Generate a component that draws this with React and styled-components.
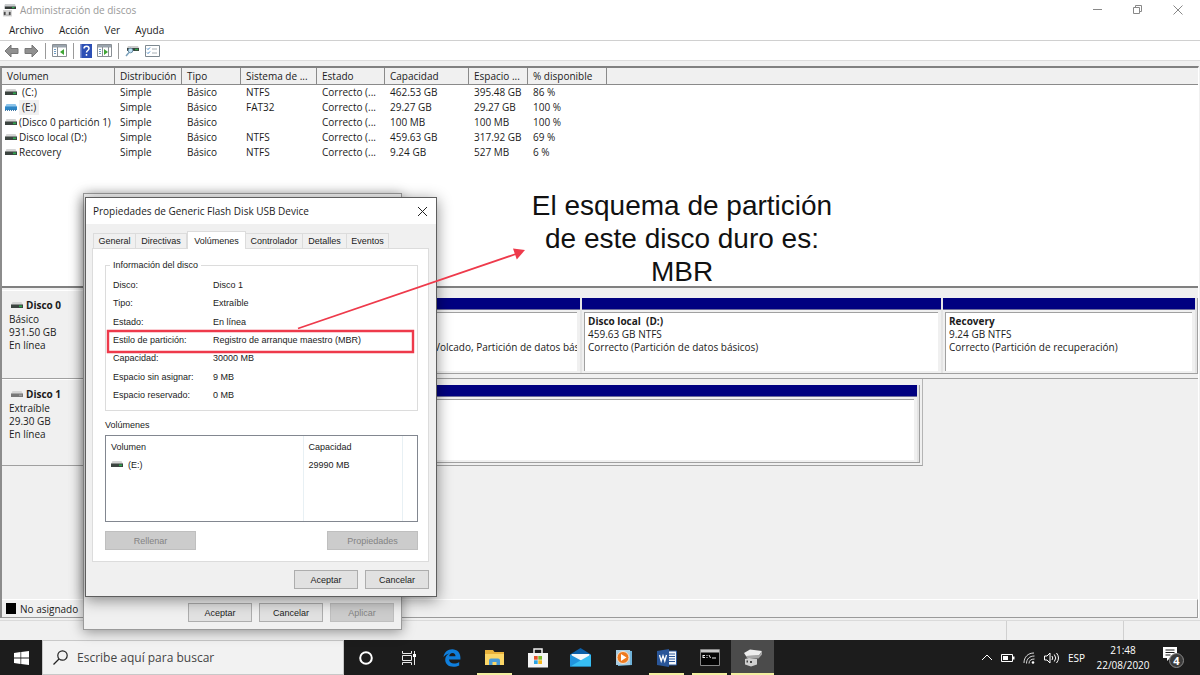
import React from "react";
import styled, { createGlobalStyle, css } from "styled-components";

const ui = '"Open Sans", "Noto Sans", sans-serif';
const shell = '"Liberation Sans", Arial, sans-serif';

const GlobalStyle = createGlobalStyle`
  *, *::before, *::after { box-sizing: border-box; }
  body { margin: 0; background: #f0f0f0; font-family: ${ui}; font-size: 10px; color: #1b1b1b; }
  button, input { font: inherit; color: inherit; margin: 0; }
`;

const Screen = styled.div`
  position: relative;
  display: flex;
  flex-direction: column;
  min-height: 100vh;
  overflow: hidden;
`;

/* ---------- main window ---------- */
const TitleBar = styled.header`
  display: flex;
  align-items: center;
  height: 20px;
  padding: 0 17px 0 3px;
  gap: 4px;
  background: #fff;
  color: #999;
  font-size: 10px;
  line-height: 20px;
`;
const WindowTitle = styled.h1`
  flex: 1;
  margin: 0;
  font: inherit;
`;
const Captions = styled.div`
  display: flex;
  gap: 30px;
`;
const CaptionButton = styled.button`
  display: flex;
  padding: 0;
  border: 0;
  background: none;
  line-height: 0;
`;
const MenuBar = styled.nav`
  display: flex;
  gap: 15px;
  height: 21px;
  padding: 0 9px;
  background: #fff;
  border-bottom: 1px solid #d0d0d0;
`;
const MenuItem = styled.button`
  padding: 0;
  border: 0;
  background: none;
  font-size: 10px;
  line-height: 20px;
`;
const ToolBar = styled.div`
  display: flex;
  align-items: center;
  gap: 5px;
  height: 20px;
  padding: 0 4px;
  background: #fff;
  border-bottom: 1px solid #dcdcdc;
`;
const ToolButton = styled.button`
  display: flex;
  padding: 0;
  border: 0;
  background: none;
`;
const ToolDivider = styled.span`
  width: 1px;
  height: 16px;
  margin: 0 1px;
  background: #9a9a9a;
`;
const Panes = styled.main`
  flex: 1;
  display: flex;
  flex-direction: column;
  margin: 5px 1px 0 0;
  border-left: 2px solid #8c8c8c;
  border-top: 2px solid #808080;
  border-right: 1px solid #fff;
`;
const ListPane = styled.section`
  height: 220px;
  background: #fff;
  border-bottom: 2px solid #808080;
`;
const VolumeTable = styled.table`
  width: 100%;
  table-layout: fixed;
  border-collapse: separate;
  border-spacing: 0;
`;
const HeadCell = styled.th`
  height: 17px;
  padding: 0 0 0 5px;
  border-right: 1px solid #8a8a8a;
  border-bottom: 1px solid #8a8a8a;
  background: #f0f0f0;
  font-weight: 400;
  font-size: 10px;
  line-height: 16px;
  text-align: left;
  white-space: nowrap;
  &:last-child { border-right: 0; }
`;
const Cell = styled.td`
  height: 15px;
  padding: 0 0 0 5px;
  font-size: 10px;
  line-height: 15px;
  white-space: nowrap;
`;
const VolumeName = styled.span`
  display: flex;
  align-items: center;
  margin-left: -2px;
  gap: 2px;
`;
const NameText = styled.span`
  padding: 0 ${(p) => (p.$letter ? "3px" : "0")};
  background: ${(p) => (p.$selected ? "#f0f0f0" : "transparent")};
`;

const GraphPane = styled.section`
  flex: 1;
  display: flex;
  flex-direction: column;
  padding-top: 2px;
`;
const DiskRow = styled.div`
  display: grid;
  grid-template-columns: 84px 1fr;
  height: ${(p) => p.$height}px;
  border-bottom: 1px solid #a0a0a0;
`;
const DiskRowShort = styled(DiskRow)`
  border-bottom: 0;
`;
const DiskLabel = styled.div`
  padding: 7px 0 0 7px;
  line-height: 13px;
  border-top: 1px solid #fff;
  border-bottom: ${(p) => (p.$closed ? "1px solid #a0a0a0" : "0")};
`;
const DiskName = styled.div`
  display: flex;
  align-items: center;
  gap: 3px;
  padding-left: 2px;
  font-size: 10px;
  line-height: 15px;
  font-weight: 700;
`;
const Partitions = styled.div`
  display: grid;
  grid-template-columns: ${(p) => p.$columns};
  gap: 2px;
  margin: ${(p) => p.$margin};
  padding-right: 2px;
  border-right: 1px solid #a0a0a0;
  border-bottom: 1px solid #a0a0a0;
  background: #e4e4e4;
`;
const Frame = styled.div`
  width: ${(p) => p.$width};
  display: grid;
  border-right: 1px solid #b4b4b4;
  border-bottom: 1px solid #a0a0a0;
`;
const Partition = styled.div`
  display: flex;
  flex-direction: column;
  gap: 2px;
  min-width: 0;
  background: #f0f0f0;
  &::before { content: ""; height: 12px; background: #000080; border-bottom: 1px solid #6d6d9a; }
`;
const PartitionBody = styled.div`
  flex: 1;
  margin: 0 3px 2px 2px;
  padding: 2px 0 0 3px;
  overflow: hidden;
  border-top: 1px solid #a0a0a0;
  border-left: 1px solid #a0a0a0;
  background: #fff;
  line-height: 13px;
  white-space: pre;
`;
const Legend = styled.div`
  display: flex;
  align-items: center;
  gap: 4px;
  height: 19px;
  margin-top: auto;
  padding-left: 4px;
  border-top: 1px solid #fff;
  border-bottom: 1px solid #9a9a9a;
  border-right: 1px solid #9a9a9a;
`;
const Swatch = styled.span`
  width: 10px;
  height: 11px;
  background: #000;
`;
const StatusBar = styled.footer`
  display: grid;
  grid-template-columns: 1fr 117px 76px;
  height: 20px;
  margin-top: 2px;
  border-top: 1px solid #dadada;
`;
const StatusCell = styled.div`
  border-right: 1px solid #d0d0d0;
  &:last-child { border-right: 0; }
`;

/* ---------- dialogs ---------- */
const dialogBase = css`
  position: absolute;
  display: flex;
  flex-direction: column;
  background: #f0f0f0;
  font-family: ${shell};
  font-size: 9px;
`;
const BackDialog = styled.div`
  ${dialogBase}
  left: 83px;
  top: 193px;
  width: 319px;
  height: 437px;
  justify-content: flex-end;
  padding: 0 7px 7px;
  border: 1px solid #9a9a9a;
  box-shadow: 0 2px 12px rgba(0, 0, 0, 0.4);
`;
const FrontDialog = styled.div`
  ${dialogBase}
  left: 85px;
  top: 197px;
  width: 352px;
  height: 400px;
  border: 1px solid #5e5e5e;
  box-shadow: 0 3px 14px rgba(0, 0, 0, 0.45);
`;
const DialogTitle = styled.div`
  display: flex;
  align-items: center;
  justify-content: space-between;
  height: 26px;
  padding: 0 8px 0 7px;
  background: #fff;
  font-family: ${ui};
  font-size: 10px;
`;
const TabStrip = styled.div`
  display: flex;
  align-items: flex-end;
  height: 24px;
  padding: 0 7px;
`;
const Tab = styled.button`
  position: relative;
  height: ${(p) => (p.$active ? "18px" : "15px")};
  margin-bottom: ${(p) => (p.$active ? "-1px" : "0")};
  width: ${(p) => p.$width}px;
  padding: 0;
  border: 1px solid #dcdcdc;
  border-left-width: ${(p) => (p.$first || p.$active ? "1px" : "0")};
  border-bottom: 0;
  background: ${(p) => (p.$active ? "#fff" : "#f0f0f0")};
  line-height: 14px;
  white-space: nowrap;
`;
const TabPage = styled.div`
  flex: 1;
  margin: 0 7px 0 6px;
  padding: 10px 10px 0 12px;
  border: 1px solid #dcdcdc;
  background: #fff;
`;
const Group = styled.fieldset`
  height: 152px;
  margin: 0;
  padding: 7px;
  border: 1px solid #dcdcdc;
`;
const GroupTitle = styled.legend`
  margin-left: -3px;
  padding: 0 3px;
  line-height: 12px;
`;
const Facts = styled.dl`
  display: grid;
  grid-template-columns: 100px 1fr;
  align-content: space-between;
  height: 124px;
  margin: 0;
  line-height: 14px;
  dt, dd { margin: 0; }
`;
const SectionTitle = styled.div`
  margin-top: 7px;
  line-height: 14px;
`;
const ListBox = styled.div`
  height: 87px;
  margin-top: 3px;
  border: 1px solid #828790;
`;
const DialogTable = styled.table`
  width: 297px;
  height: 85px;
  table-layout: fixed;
  border-collapse: collapse;
  th, td {
    padding: 0 0 0 5px;
    border-right: 1px solid #e8f0f4;
    font-weight: 400;
    text-align: left;
    vertical-align: top;
    line-height: 18px;
  }
  th { height: 20px; padding-top: 2px; }
`;
const DriveLabel = styled.span`
  display: flex;
  align-items: center;
  gap: 5px;
`;
const ButtonRow = styled.div`
  display: flex;
  justify-content: ${(p) => (p.$split ? "space-between" : "flex-end")};
  gap: 7px;
  padding: ${(p) => p.$pad || "0"};
`;
const PushButton = styled.button`
  width: ${(p) => (p.$wide ? "91px" : "64px")};
  height: 19px;
  padding: 0;
  border: 1px solid #adadad;
  background: #e1e1e1;
  line-height: 16px;
  &:disabled { background: #ccc; border-color: #bfbfbf; color: #838383; }
`;

/* ---------- annotation ---------- */
const Note = styled.p`
  position: absolute;
  left: 517px;
  top: 189px;
  width: 330px;
  margin: 0;
  color: #111;
  font-family: "Liberation Sans", Arial, sans-serif;
  font-size: 28px;
  line-height: 33px;
  text-align: center;
`;
const Marks = styled.svg`
  position: absolute;
  left: 100px;
  top: 240px;
  pointer-events: none;
`;

/* ---------- taskbar ---------- */
const TaskBar = styled.div`
  display: flex;
  height: 35px;
  background: #1c1c1c;
  color: #fff;
`;
const StartButton = styled.button`
  display: grid;
  place-items: center;
  width: 42px;
  padding: 0;
  border: 0;
  background: none;
`;
const Search = styled.label`
  display: flex;
  align-items: center;
  gap: 9px;
  width: 302px;
  padding-left: 10px;
  border: 1px solid #c8c8c8;
  background: #f2f2f2;
`;
const SearchInput = styled.input`
  flex: 1;
  min-width: 0;
  padding: 0;
  border: 0;
  outline: 0;
  background: none;
  font-size: 12px;
  &::placeholder { color: #444; opacity: 1; }
`;
const Apps = styled.div`
  display: flex;
  flex: 1;
`;
const AppButton = styled.button`
  display: grid;
  place-items: center;
  width: 43px;
  padding: 0;
  border: 0 solid transparent;
  border-width: 0 ${(p) => (p.$active ? "0" : "4px")};
  background: ${(p) => (p.$active ? "#4b4b4b" : "transparent")};
  box-shadow: ${(p) => (p.$open ? "inset 0 -2px 0 #f3efa0" : "none")};
`;
const Tray = styled.div`
  display: flex;
  align-items: center;
  gap: 8px;
  padding-right: 15px;
  font-size: 10px;
`;
const Clock = styled.time`
  width: 56px;
  margin-left: 2px;
  font-size: 10px;
  line-height: 15px;
  text-align: center;
`;
const NoticeButton = styled.button`
  display: flex;
  margin-left: 3px;
  padding: 0;
  border: 0;
  background: none;
`;

const DriveIcon = ({ tone }) => {
  const blue = tone === "blue";
  return (
    <svg width="12" height="8" viewBox="0 0 12 8" aria-hidden="true">
      <path d="M1.500 0h9L12 3H0z" fill={blue ? "#8cc4ea" : "#d5d5d5"} />
      <rect y="2.500" width="12" height="3.500" fill={blue ? "#2f86c5" : tone === "gray" ? "#777" : "#3c4440"} />
      {!blue && <rect x="8" y="3.500" width="3" height="1.600" fill={tone === "gray" ? "#999" : "#2da84c"} />}
      {blue && <path d="M0 6.300h12" stroke="#1c5d92" strokeDasharray="1 1" />}
    </svg>
  );
};

const Arrow = ({ flip }) => (
  <svg width="15" height="14" viewBox="0 0 15 14" aria-hidden="true">
    <path
      transform={flip ? "translate(15 0) scale(-1 1)" : undefined}
      d="M1 7l6-6v3.500h7v5H7V13z" fill="#909090" stroke="#777" strokeWidth="1" />
  </svg>
);

const PanelIcon = ({ side }) => (
  <svg width="15" height="13" viewBox="0 0 15 13" aria-hidden="true">
    <path d="M.5 .5h14v12H.5z" fill="#fff" stroke="#8a8f94" />
    <path d="M1 1h13v2.500H1z" fill="#9aa4ad" />
    <path d={side === "left" ? "M5.500 3v9.500" : "M5.500 3v9.500M11.500 3v9.500"} stroke="#8a8f94" />
    <path d="M2 5.500h2M2 7.500h2M2 9.500h2" stroke="#6d9bc4" />
    <path d={side === "left" ? "M12 5v6L8 8z" : "M7 5v6l4-3z"} fill="#3fa534" />
  </svg>
);

const volumes = [
  ["(C:)", "Simple", "Básico", "NTFS", "Correcto (...", "462.53 GB", "395.48 GB", "86 %"],
  ["(E:)", "Simple", "Básico", "FAT32", "Correcto (...", "29.27 GB", "29.27 GB", "100 %"],
  ["(Disco 0 partición 1)", "Simple", "Básico", "", "Correcto (...", "100 MB", "100 MB", "100 %"],
  ["Disco local (D:)", "Simple", "Básico", "NTFS", "Correcto (...", "459.63 GB", "317.92 GB", "69 %"],
  ["Recovery", "Simple", "Básico", "NTFS", "Correcto (...", "9.24 GB", "527 MB", "6 %"],
];
const columns = [
  ["Volumen", 113], ["Distribución", 67], ["Tipo", 59], ["Sistema de ...", 76],
  ["Estado", 68], ["Capacidad", 84], ["Espacio ...", 59], ["% disponible", 79],
];
const facts = [
  ["Disco:", "Disco 1"], ["Tipo:", "Extraíble"], ["Estado:", "En línea"],
  ["Estilo de partición:", "Registro de arranque maestro (MBR)"],
  ["Capacidad:", "30000 MB"], ["Espacio sin asignar:", "9 MB"], ["Espacio reservado:", "0 MB"],
];
const tabs = [
  ["General", 43], ["Directivas", 51], ["Volúmenes", 59], ["Controlador", 57], ["Detalles", 44], ["Eventos", 42],
];

const taskApps = [
  { name: "Cortana", icon: <svg width="16" height="16"><circle cx="8" cy="8" r="5.800" fill="none" stroke="#fff" strokeWidth="2" /></svg> },
  { name: "Vista de tareas", icon: (
    <svg width="16" height="14" fill="none" stroke="#e8e8e8">
      <path d="M1.500 0v2.500h9V0M1.500 14v-2.500h9V14M1.500 4.500h9v5h-9zM13.500 0v14" /><path d="M12 3h3v3h-3z" fill="#fff" stroke="none" />
    </svg>) },
  { name: "Edge", icon: (
    <svg width="18" height="18" viewBox="0 0 18 18">
      <path d="M.5 8C1.200 3.300 4.700.3 9.200.3c5 0 8.200 3.600 8.200 8v2.200H6c.2 2.500 2.300 4 5 4 1.900 0 3.700-.5 5.200-1.500v3.500c-1.700.9-3.700 1.300-5.800 1.300-5 0-8.200-2.800-8.200-7C2.200 7.800 3.800 5.600 6.400 4.400 3.900 4.700 2 6 .5 8zM6.200 7.200h6.300c0-2-1-3.300-3-3.300S6.500 5.300 6.200 7.200z" fill="#0f7edb" />
    </svg>) },
  { name: "Explorador", open: true, icon: (
    <svg width="20" height="17" viewBox="0 0 20 17">
      <path d="M0 1h8l1.500 2H19v13H0z" fill="#e8b23c" /><path d="M0 5h19v11H0z" fill="#fbd667" />
      <path d="M4 16v-4.500q0-2 2-2h7q2 0 2 2V16h-3.500v-3h-4v3z" fill="#4a9bd8" />
    </svg>) },
  { name: "Tienda", icon: (
    <svg width="20" height="20" viewBox="0 0 20 20">
      <path d="M6 6V1h8v5" fill="none" stroke="#f2f2f2" strokeWidth="1.500" /><path d="M0 5h20v14.500H0z" fill="#f4f4f4" />
      <path d="M6 8h3.700v3.700H6z" fill="#e5512a" /><path d="M10.300 8H14v3.700h-3.700z" fill="#7dba28" />
      <path d="M6 12.300h3.700V16H6z" fill="#2aa3e4" /><path d="M10.300 12.300H14V16h-3.700z" fill="#f6b71c" />
    </svg>) },
  { name: "Correo", icon: (
    <svg width="21" height="19" viewBox="0 0 21 19">
      <path d="M0 6.500L10.500 0 21 6.500v12H0z" fill="#0b5fa8" /><path d="M1.500 6h18v7h-18z" fill="#f3f7fa" />
      <path d="M0 6.500L12 13 0 18.500z" fill="#2193dc" /><path d="M21 6.500L0 18.500h21z" fill="#37bdf2" />
    </svg>) },
  { name: "Reproductor", icon: (
    <svg width="18" height="18" viewBox="0 0 18 18">
      <path d="M3 1l14 1v14L3 17z" fill="#6fb2d8" /><path d="M1 1h14v15H1z" fill="#a8cde2" />
      <circle cx="8" cy="8.500" r="6" fill="#ee7a1f" stroke="#f7e3d0" /><path d="M6 5l5.500 3.500L6 12z" fill="#fff" />
    </svg>) },
  { name: "Word", open: true, icon: (
    <svg width="20" height="18" viewBox="0 0 20 18">
      <path d="M11 2h8.500v14H11z" fill="#f4f7fb" stroke="#2a5699" /><path d="M12 5h6M12 7.500h6M12 10h6M12 12.500h6" stroke="#2a5699" />
      <path d="M0 2l12-2v18L0 16z" fill="#2a5699" /><path d="M2.500 6l1.700 6L6 6.800 7.800 12 9.500 6" fill="none" stroke="#fff" strokeWidth="1.300" />
    </svg>) },
  { name: "Consola", open: true, icon: (
    <svg width="20" height="17" viewBox="0 0 20 17">
      <path d="M.5.5h19v16H.5z" fill="#050505" stroke="#888" /><path d="M1 1h18v2.500H1z" fill="#c8c8c8" />
      <path d="M3 6.500h2M3 6v3M3 8.500h2M7 6v1M7 8v1M9 6l1.500 3M12 9h4" stroke="#eee" />
    </svg>) },
  { name: "Administración de discos", open: true, active: true, icon: (
    <svg width="20" height="18" viewBox="0 0 20 18">
      <path d="M1 4l6-3.500 12 1.500-3 4.500L3 7z" fill="#ededed" /><path d="M1 4l2 3 13-.5L19 2v3.500l-3.500 4L4 9z" fill="#a6a6a6" />
      <path d="M2 10l4-1 8 1v5.500L8 17.500l-6-2z" fill="#cfcfcf" /><path d="M3.500 11.500h1.500v2H3.500zM7 12h2v2H7z" fill="#444" />
    </svg>) },
];

export default function App() {
  return (
    <Screen>
      <GlobalStyle />
      <TitleBar>
        <svg width="13" height="13" viewBox="0 0 13 13" aria-hidden="true">
          <path d="M2 0h10l1 3v2H1V3z" fill="#c9ccce" /><path d="M2 2.500h11V5H2z" fill="#343a38" />
          <path d="M9 3h2.500v1.200H9z" fill="#2da84c" /><path d="M0 6h9v6.500H0z" fill="#d6d6d6" />
          <path d="M1 8h1.500v3H1zM6 8h1.500v3H6zM3 11h3" fill="#333" stroke="#777" strokeWidth=".5" />
        </svg>
        <WindowTitle>Administración de discos</WindowTitle>
        <Captions>
          <CaptionButton aria-label="Minimizar"><svg width="10" height="10"><path d="M0 4.500h9" stroke="#888" /></svg></CaptionButton>
          <CaptionButton aria-label="Restaurar"><svg width="10" height="10" fill="none" stroke="#888"><path d="M.5 2.500h6v6h-6zM2.500 2.500v-2h6v6h-2" /></svg></CaptionButton>
          <CaptionButton aria-label="Cerrar"><svg width="10" height="10"><path d="M.5.5l9 9M9.500.5l-9 9" stroke="#888" /></svg></CaptionButton>
        </Captions>
      </TitleBar>
      <MenuBar>
        {["Archivo", "Acción", "Ver", "Ayuda"].map((m) => <MenuItem key={m}>{m}</MenuItem>)}
      </MenuBar>
      <ToolBar>
        <ToolButton aria-label="Atrás"><Arrow /></ToolButton>
        <ToolButton aria-label="Adelante"><Arrow flip /></ToolButton>
        <ToolDivider />
        <ToolButton aria-label="Árbol"><PanelIcon side="left" /></ToolButton>
        <ToolDivider />
        <ToolButton aria-label="Ayuda">
          <svg width="12" height="14" viewBox="0 0 12 14">
            <path d="M0 0h12v14H0z" fill="#2c4fb5" /><path d="M0 0h1.500v14H0z" fill="#8396d4" />
            <path d="M4 4.500c0-3 5-3 5 0 0 2-2.500 2-2.500 4M6.500 10v1.800" fill="none" stroke="#fff" strokeWidth="1.500" />
          </svg>
        </ToolButton>
        <ToolButton aria-label="Panel de acciones"><PanelIcon side="right" /></ToolButton>
        <ToolDivider />
        <ToolButton aria-label="Actualizar">
          <svg width="15" height="13" viewBox="0 0 15 13">
            <path d="M3 2h10l1 2H2z" fill="#ccc" /><path d="M2 4h12v3H2z" fill="#3c4440" /><path d="M10 4.800h3v1.400h-3z" fill="#2da84c" />
            <circle cx="5.500" cy="6.500" r="2.300" fill="#bfe0f2" stroke="#6a8fa8" /><path d="M4 8.500L1 12" stroke="#7aa0ba" strokeWidth="1.500" />
          </svg>
        </ToolButton>
        <ToolButton aria-label="Propiedades">
          <svg width="15" height="12" viewBox="0 0 15 12">
            <path d="M.5.5h14v11H.5z" fill="#fff" stroke="#7d8890" /><path d="M2 3.500l1 1 2-2M2 7.500l1 1 2-2" fill="none" stroke="#3b82c4" />
            <path d="M7 4h5M7 8h5" stroke="#a8b0b6" />
          </svg>
        </ToolButton>
      </ToolBar>

      <Panes>
        <ListPane>
          <VolumeTable>
            <colgroup>{columns.map(([n, w]) => <col key={n} style={{ width: w }} />)}<col /></colgroup>
            <thead><tr>{columns.map(([n]) => <HeadCell key={n}>{n}</HeadCell>)}<HeadCell as="td" /></tr></thead>
            <tbody>
              {volumes.map((row, r) => (
                <tr key={row[0]}>
                  {row.map((v, i) => (
                    <Cell key={i}>
                      {i ? v : (
                        <VolumeName>
                          <DriveIcon tone={r === 1 ? "blue" : "green"} />
                          <NameText $letter={r < 2} $selected={r === 1}>{v}</NameText>
                        </VolumeName>
                      )}
                    </Cell>
                  ))}
                </tr>
              ))}
            </tbody>
          </VolumeTable>
        </ListPane>

        <GraphPane>
          <DiskRow $height={89}>
            <DiskLabel>
              <DiskName><DriveIcon />Disco 0</DiskName>
              <div>Básico</div><div>931.50 GB</div><div>En línea</div>
            </DiskLabel>
            <Partitions $columns="340fr 152fr 359fr 252fr" $margin="8px 0 4px">
              <Partition><PartitionBody /></Partition>
              <Partition><PartitionBody>{"\n\nVolcado, Partición de datos básicos)"}</PartitionBody></Partition>
              <Partition><PartitionBody><strong>{"Disco local  (D:)"}</strong>{"\n459.63 GB NTFS\nCorrecto (Partición de datos básicos)"}</PartitionBody></Partition>
              <Partition><PartitionBody><strong>Recovery</strong>{"\n9.24 GB NTFS\nCorrecto (Partición de recuperación)"}</PartitionBody></Partition>
            </Partitions>
          </DiskRow>
          <DiskRowShort $height={87}>
            <DiskLabel $closed>
              <DiskName><DriveIcon tone="gray" />Disco 1</DiskName>
              <div>Extraíble</div><div>29.30 GB</div><div>En línea</div>
            </DiskLabel>
            <Frame $width="75.3%">
              <Partitions $columns="1fr" $margin="6px 2px 2px 0"><Partition><PartitionBody /></Partition></Partitions>
            </Frame>
          </DiskRowShort>
          <Legend><Swatch />No asignado</Legend>
        </GraphPane>
      </Panes>
      <StatusBar><StatusCell /><StatusCell /><StatusCell /></StatusBar>

      <TaskBar>
        <StartButton aria-label="Inicio">
          <svg width="15" height="14" viewBox="0 0 15 14" fill="#fff"><path d="M0 2l6.500-.9v5.500H0zM7.200 1L15 0v6.600H7.200zM0 7.400h6.500v5.500L0 12zM7.200 7.400H15V14l-7.800-1z" /></svg>
        </StartButton>
        <Search>
          <svg width="15" height="15" viewBox="0 0 15 15" fill="none" stroke="#222" strokeWidth="1.200"><circle cx="9.500" cy="5.500" r="4.700" /><path d="M6 9l-5.500 5.500" /></svg>
          <SearchInput aria-label="Buscar" placeholder="Escribe aquí para buscar" />
        </Search>
        <Apps>
          {taskApps.map((a) => <AppButton key={a.name} aria-label={a.name} $open={a.open} $active={a.active}>{a.icon}</AppButton>)}
        </Apps>
        <Tray>
          <svg width="12" height="7" fill="none" stroke="#fff"><path d="M1 6l5-5 5 5" /></svg>
          <svg width="14" height="8"><path d="M.5.5h11v7H.5z" fill="none" stroke="#fff" /><path d="M2 2h5v4H2zM12 2.500h1.500v3H12z" fill="#fff" /></svg>
          <svg width="13" height="12" fill="none" stroke="#ddd"><path d="M1 11C1 5 5 1 11 1M3.500 11.500c0-4.500 3-7.500 8-7.500M6 11.500C6 8.500 8 7 11.500 7" /><circle cx="10" cy="10.500" r="1.300" fill="#fff" stroke="none" /></svg>
          <svg width="16" height="12" fill="none" stroke="#fff"><path d="M.5 4v4H3l3 3V1L3 4zM8 4q1.500 2 0 4M10.300 2.500q3 3.500 0 7M12.500 1q4 5 0 10" /></svg>
          <span>ESP</span>
          <Clock>21:48<br />22/08/2020</Clock>
          <NoticeButton aria-label="Notificaciones">
            <svg width="23" height="23" viewBox="0 0 23 23">
              <path d="M1 1h14v11H8l-3 3v-3H1z" fill="#fff" /><path d="M3.500 4h9M3.500 6.500h9M3.500 9h5" stroke="#1c1c1c" />
              <circle cx="14.500" cy="14.500" r="7" fill="#3b3b3b" stroke="#8a8a8a" />
              <text x="14.500" y="18.500" textAnchor="middle" fontSize="11" fontWeight="700" fill="#fff">4</text>
            </svg>
          </NoticeButton>
        </Tray>
      </TaskBar>

      <BackDialog>
        <ButtonRow>
          <PushButton>Aceptar</PushButton><PushButton>Cancelar</PushButton><PushButton disabled>Aplicar</PushButton>
        </ButtonRow>
      </BackDialog>

      <FrontDialog role="dialog" aria-labelledby="dlg-title">
        <DialogTitle>
          <span id="dlg-title">Propiedades de Generic Flash Disk USB Device</span>
          <CaptionButton aria-label="Cerrar"><svg width="11" height="11"><path d="M1 1l9 9M10 1l-9 9" stroke="#222" /></svg></CaptionButton>
        </DialogTitle>
        <TabStrip role="tablist">
          {tabs.map(([t, w], i) => <Tab key={t} role="tab" aria-selected={i === 2} $width={w} $first={i === 0} $active={i === 2}>{t}</Tab>)}
        </TabStrip>
        <TabPage>
          <Group>
            <GroupTitle>Información del disco</GroupTitle>
            <Facts>{facts.map(([k, v]) => <React.Fragment key={k}><dt>{k}</dt><dd>{v}</dd></React.Fragment>)}</Facts>
          </Group>
          <SectionTitle>Volúmenes</SectionTitle>
          <ListBox>
            <DialogTable>
              <colgroup><col style={{ width: 197 }} /><col /></colgroup>
              <thead><tr><th>Volumen</th><th>Capacidad</th></tr></thead>
              <tbody><tr><td><DriveLabel><DriveIcon />(E:)</DriveLabel></td><td>29990 MB</td></tr></tbody>
            </DialogTable>
          </ListBox>
          <ButtonRow $split $pad="9px 0 0">
            <PushButton $wide disabled>Rellenar</PushButton><PushButton $wide disabled>Propiedades</PushButton>
          </ButtonRow>
        </TabPage>
        <ButtonRow $pad="8px 7px 7px">
          <PushButton>Aceptar</PushButton><PushButton>Cancelar</PushButton>
        </ButtonRow>
      </FrontDialog>

      <Note>El esquema de partición<br />de este disco duro es:<br />MBR</Note>
      <Marks width="430" height="115" viewBox="0 0 430 115">
        <path d="M8 91h305v21H8z" fill="none" stroke="#ee3a4b" strokeWidth="2.400" />
        <path d="M198 88.500L416 14" stroke="#ee3a4b" strokeWidth="1.800" />
        <path d="M425 10l-12-1.500 3.800 11z" fill="#ee3a4b" />
      </Marks>
    </Screen>
  );
}
